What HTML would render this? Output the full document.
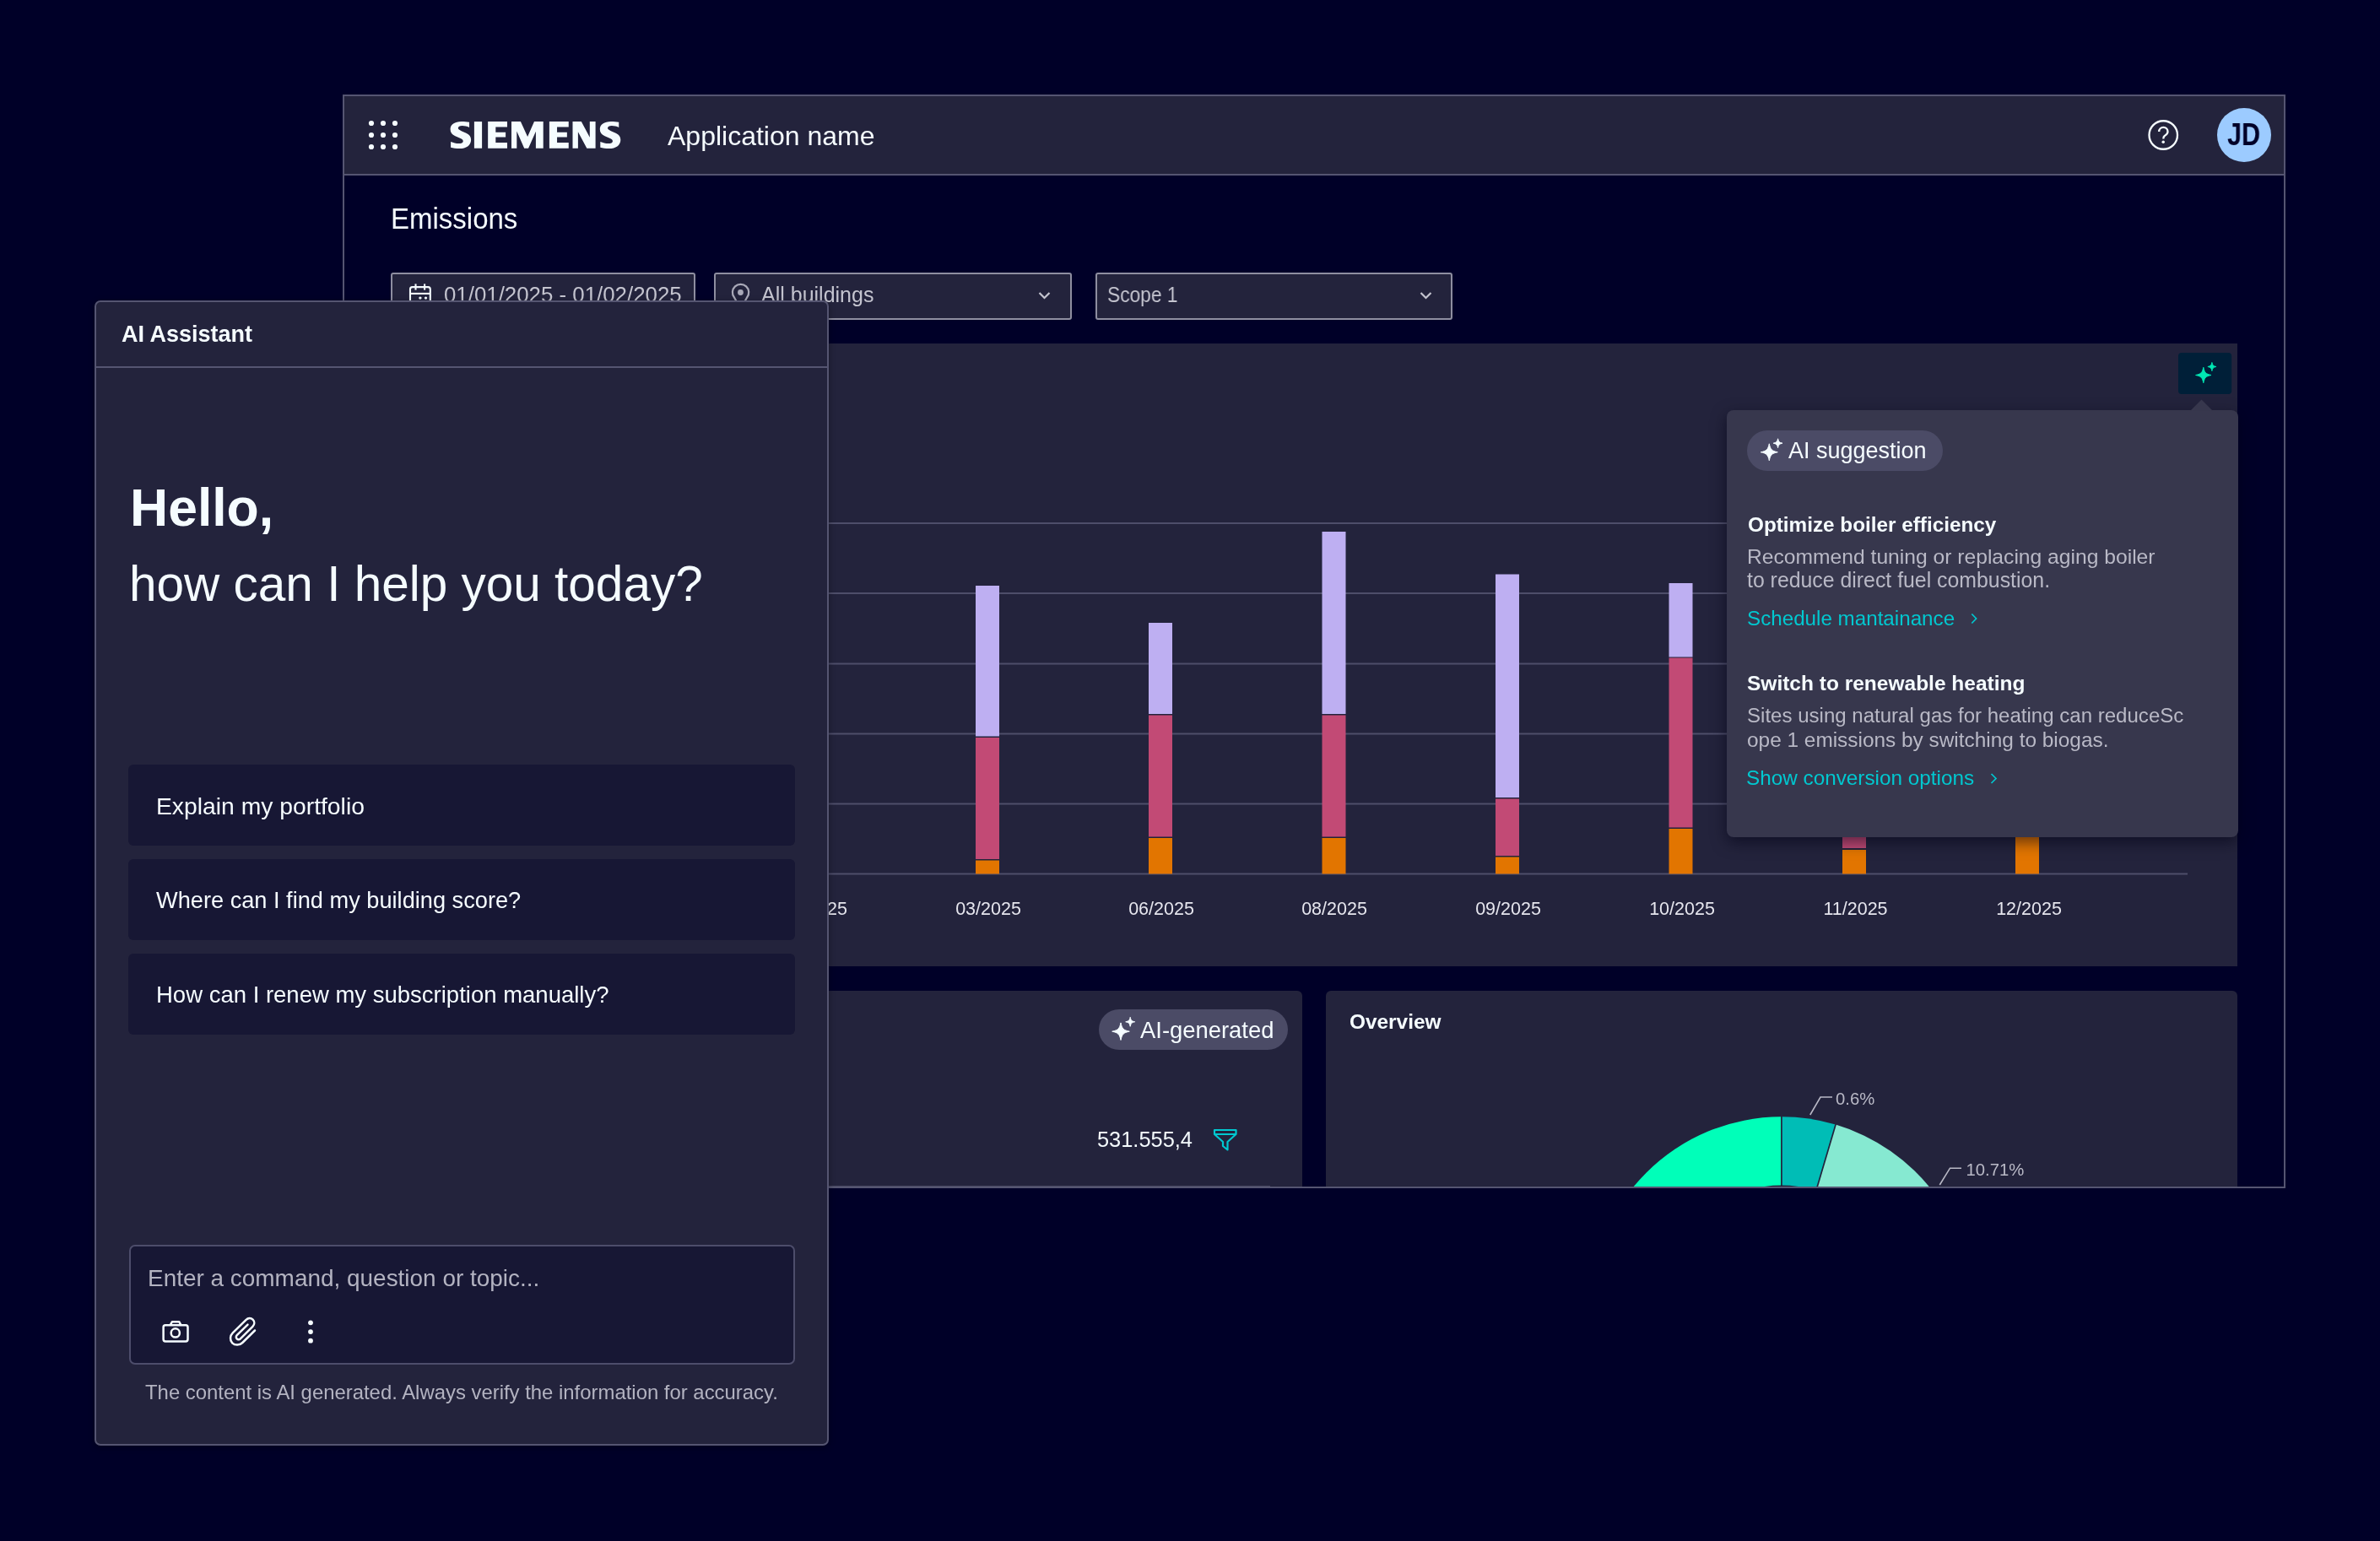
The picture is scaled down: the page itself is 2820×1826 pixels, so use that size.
<!DOCTYPE html>
<html><head><meta charset="utf-8">
<style>
*{box-sizing:border-box;margin:0;padding:0}
html,body{width:2820px;height:1826px;overflow:hidden;background:#000028;font-family:"Liberation Sans",sans-serif;color:#f5fcff}
.a{position:absolute}
.t{position:absolute;white-space:nowrap;line-height:1;will-change:transform}
svg{position:absolute;overflow:visible}
</style></head><body>

<!-- ============ APP WINDOW ============ -->
<div class="a" id="win" style="left:406px;top:112px;width:2302px;height:1296px;border:2px solid #555571;background:#000028;overflow:hidden">
</div>

<!-- header -->
<div class="a" style="left:408px;top:114px;width:2298px;height:92px;background:#23233c"></div>
<div class="a" style="left:408px;top:206px;width:2298px;height:2px;background:#555571"></div>
<svg style="left:0;top:0" width="2820" height="400">
  <g fill="#f5fcff">
    <circle cx="440" cy="146" r="3.1"/><circle cx="454" cy="146" r="3.1"/><circle cx="468" cy="146" r="3.1"/>
    <circle cx="440" cy="160" r="3.1"/><circle cx="454" cy="160" r="3.1"/><circle cx="468" cy="160" r="3.1"/>
    <circle cx="440" cy="174" r="3.1"/><circle cx="454" cy="174" r="3.1"/><circle cx="468" cy="174" r="3.1"/>
  </g>
  <circle cx="2563.25" cy="160" r="16.75" fill="none" stroke="#f5fcff" stroke-width="2.3"/>
  <circle cx="2659" cy="160" r="32" fill="#9ccbff"/>
</svg>
<svg style="left:0;top:0" width="800" height="200"><g fill="#f5fcff">
  <path transform="translate(528,140) scale(0.025961)" d="M1080 185 L1080 420 C980 380 860 350 760 350 C640 350 570 395 570 455 C570 510 630 545 720 585 L940 680 C1090 750 1160 850 1160 990 C1160 1240 930 1390 640 1390 C490 1390 340 1370 235 1340 L235 1080 C360 1130 480 1160 590 1160 C720 1160 800 1110 800 1045 C800 990 750 955 660 915 L440 820 C290 750 215 650 215 500 C215 290 420 150 720 150 C850 150 980 165 1080 185Z"/>
  <path transform="translate(705.2,140) scale(0.025961)" d="M1080 185 L1080 420 C980 380 860 350 760 350 C640 350 570 395 570 455 C570 510 630 545 720 585 L940 680 C1090 750 1160 850 1160 990 C1160 1240 930 1390 640 1390 C490 1390 340 1370 235 1340 L235 1080 C360 1130 480 1160 590 1160 C720 1160 800 1110 800 1045 C800 990 750 955 660 915 L440 820 C290 750 215 650 215 500 C215 290 420 150 720 150 C850 150 980 165 1080 185Z"/>
  <rect x="561.9" y="144.1" width="9.2" height="31.6"/>
  <path d="M578.15 144.1 H601.00 V150.4 H587.30 V156.7 H599.10 V162.4 H587.30 V169.0 H601.00 V175.7 H578.15 Z"/>
  <path d="M650.90 144.1 H673.75 V150.4 H660.05 V156.7 H671.85 V162.4 H660.05 V169.0 H673.75 V175.7 H650.90 Z"/>
  <path d="M606.0 144.1 H616.9 L625.1 162.1 L633.0 144.1 H643.7 V175.7 H634.9 V155.8 L626.05 175.7 H621.2 L612.3 155.4 V175.7 H606.0 Z"/>
  <path d="M678.5 144.1 H688.8 L698.8 162.8 V144.1 H705.6 V175.7 H695.35 L684.9 156.2 V175.7 H678.5 Z"/>
</g></svg>
<div class="t" style="left:791px;top:145px;font-size:32px">Application name</div>
<div class="t" style="left:2639.3px;top:141.5px;font-size:36px;font-weight:700;color:#000028;transform:scaleX(0.85);transform-origin:0 0">JD</div>

<!-- page title -->
<div class="t" style="left:463.3px;top:243px;font-size:33px;transform:scaleY(1.07);transform-origin:0 85%">Emissions</div>

<!-- filters -->
<div class="a" style="left:463px;top:323px;width:361px;height:56px;border:2px solid #8e8ea0;border-radius:3px;background:#23233c"></div>
<div class="a" style="left:846px;top:323px;width:424px;height:56px;border:2px solid #8e8ea0;border-radius:3px;background:#23233c"></div>
<div class="a" style="left:1298px;top:323px;width:423px;height:56px;border:2px solid #8e8ea0;border-radius:3px;background:#23233c"></div>
<div class="t" style="left:526px;top:337px;font-size:25.85px;color:#c4c4cf">01/01/2025 - 01/02/2025</div>
<div class="t" style="left:902px;top:337px;font-size:25px;color:#c4c4cf">All buildings</div>
<div class="t" style="left:1312px;top:337px;font-size:25px;color:#c4c4cf;transform:scaleX(0.91);transform-origin:0 0">Scope 1</div>

<svg style="left:0;top:0" width="1800" height="1700">
  <!-- calendar -->
  <g fill="none" stroke="#f5fcff" stroke-width="2.1">
    <rect x="486" y="340.1" width="23.8" height="30" rx="2.6"/>
    <line x1="486" y1="347.9" x2="509.8" y2="347.9"/>
    <line x1="492.5" y1="336.4" x2="492.5" y2="343.6"/>
    <line x1="503.1" y1="336.4" x2="503.1" y2="343.6"/>
  </g>
  <g fill="#f5fcff"><circle cx="497.9" cy="353.1" r="1.7"/><circle cx="504.5" cy="353.1" r="1.7"/></g>
  <!-- location -->
  <path d="M877.55 366 L870.03 352.5 A9.65 9.65 0 1 1 885.07 352.5 Z" fill="none" stroke="#a9a9b8" stroke-width="2.2" stroke-linejoin="round"/>
  <circle cx="877.45" cy="346.5" r="3.4" fill="#a9a9b8"/>
  <!-- chevrons -->
  <g fill="none" stroke="#c4c4cf" stroke-width="2.2">
    <path d="M1231.5 347 L1237.5 353 L1243.5 347"/>
    <path d="M1683.5 347 L1689.5 353 L1695.5 347"/>
  </g>
  <!-- help ? -->
  <path d="M2558.2 156 C2558.2 152.8 2560.5 150.9 2563.3 150.9 C2566.3 150.9 2568.5 153 2568.5 155.9 C2568.5 158.6 2566.6 159.7 2564.8 161 C2563.6 161.9 2563.3 162.6 2563.3 164.6" fill="none" stroke="#f5fcff" stroke-width="2.3"/>
  <circle cx="2563.2" cy="168.2" r="1.75" fill="#f5fcff"/>
  </svg>

<!-- chart card -->
<div class="a" style="left:463px;top:407px;width:2188.4px;height:738px;background:#23233c"></div>

<svg style="left:0;top:0" width="2820" height="1200">
  <g fill="#4e4e6a">
    <rect x="500" y="619" width="2092" height="2"/>
    <rect x="500" y="702" width="2092" height="2"/>
    <rect x="500" y="785.5" width="2092" height="2"/>
    <rect x="500" y="868.5" width="2092" height="2"/>
    <rect x="500" y="951.5" width="2092" height="2"/>
    <rect x="500" y="1034.5" width="2092" height="2"/>
  </g>
  <!-- bars: lavender / pink / orange -->
  <g>
    <rect x="1156" y="694" width="28" height="178.5" fill="#beaff2"/>
    <rect x="1156" y="874" width="28" height="144" fill="#c24a75"/>
    <rect x="1156" y="1019.5" width="28" height="16" fill="#e27500"/>

    <rect x="1361" y="738" width="28" height="108" fill="#beaff2"/>
    <rect x="1361" y="847.5" width="28" height="144" fill="#c24a75"/>
    <rect x="1361" y="993" width="28" height="42.5" fill="#e27500"/>

    <rect x="1566.5" y="630" width="28" height="216" fill="#beaff2"/>
    <rect x="1566.5" y="847.5" width="28" height="144" fill="#c24a75"/>
    <rect x="1566.5" y="993" width="28" height="42.5" fill="#e27500"/>

    <rect x="1772" y="680.5" width="28" height="264.5" fill="#beaff2"/>
    <rect x="1772" y="946.5" width="28" height="67.5" fill="#c24a75"/>
    <rect x="1772" y="1015.5" width="28" height="20" fill="#e27500"/>

    <rect x="1977.5" y="691" width="28" height="87.5" fill="#beaff2"/>
    <rect x="1977.5" y="779.5" width="28" height="201" fill="#c24a75"/>
    <rect x="1977.5" y="982" width="28" height="53.5" fill="#e27500"/>

    <rect x="2183" y="900" width="28" height="105" fill="#c24a75"/>
    <rect x="2183" y="1007" width="28" height="28.5" fill="#e27500"/>

    <rect x="2388" y="900" width="28" height="135.5" fill="#e27500"/>
  </g>
  <g font-family="Liberation Sans" font-size="21.5" fill="#e6e6ee" text-anchor="middle">
    <text x="965" y="1083.8">01/2025</text>
    <text x="1171" y="1083.8">03/2025</text>
    <text x="1376" y="1083.8">06/2025</text>
    <text x="1581" y="1083.8">08/2025</text>
    <text x="1787" y="1083.8">09/2025</text>
    <text x="1993" y="1083.8">10/2025</text>
    <text x="2198.5" y="1083.8">11/2025</text>
    <text x="2404" y="1083.8">12/2025</text>
  </g>
  <!-- AI button -->
  <rect x="2581" y="418" width="63.2" height="49" rx="4" fill="#001f38"/>
  <g fill="#00e8b4" stroke="#00e8b4" stroke-width="1" stroke-linejoin="round">
    <path d="M2610.80 435.30 C2612.18 441.74 2613.56 443.12 2620.00 444.50 C2613.56 445.88 2612.18 447.26 2610.80 453.70 C2609.42 447.26 2608.04 445.88 2601.60 444.50 C2608.04 443.12 2609.42 441.74 2610.80 435.30Z"/>
    <path d="M2620.90 429.50 C2621.65 433.00 2622.40 433.75 2625.90 434.50 C2622.40 435.25 2621.65 436.00 2620.90 439.50 C2620.15 436.00 2619.40 435.25 2615.90 434.50 C2619.40 433.75 2620.15 433.00 2620.90 429.50Z"/>
  </g>
</svg>

<!-- popover -->
<div class="a" style="left:2046px;top:486px;width:606px;height:506px;background:#37374d;border-radius:8px;box-shadow:0 6px 18px rgba(0,0,20,0.55)"></div>
<svg style="left:0;top:0" width="2820" height="600">
  <path d="M2595.5 486.5 L2608.5 473.5 L2621.5 486.5 Z" fill="#37374d"/>
</svg>
<div class="a" style="left:2070px;top:510px;width:232px;height:48px;background:#4b4b66;border-radius:24px"></div>
<svg style="left:0;top:0" width="2820" height="600">
  <g fill="#f5fcff" stroke="#f5fcff" stroke-width="1" stroke-linejoin="round">
    <path d="M2096.30 525.80 C2097.80 532.80 2099.30 534.30 2106.30 535.80 C2099.30 537.30 2097.80 538.80 2096.30 545.80 C2094.80 538.80 2093.30 537.30 2086.30 535.80 C2093.30 534.30 2094.80 532.80 2096.30 525.80Z"/>
    <path d="M2106.60 519.80 C2107.41 523.58 2108.22 524.39 2112.00 525.20 C2108.22 526.01 2107.41 526.82 2106.60 530.60 C2105.79 526.82 2104.98 526.01 2101.20 525.20 C2104.98 524.39 2105.79 523.58 2106.60 519.80Z"/>
  </g>
</svg>
<div class="t" style="left:2119px;top:521.2px;font-size:27px">AI suggestion</div>
<div class="t" style="left:2070.5px;top:610px;font-size:24.3px;font-weight:700">Optimize boiler efficiency</div>
<div class="t" style="left:2070.2px;top:647.6px;font-size:24.65px;color:#b9b9c6">Recommend tuning or replacing aging boiler</div>
<div class="t" style="left:2070.2px;top:675.5px;font-size:24.85px;color:#b9b9c6">to reduce direct fuel combustion.</div>
<div class="t" style="left:2070.2px;top:721px;font-size:24.2px;color:#00c8d0">Schedule mantainance</div>
<div class="t" style="left:2070.2px;top:798px;font-size:24.5px;font-weight:700">Switch to renewable heating</div>
<div class="t" style="left:2069.5px;top:836.3px;font-size:24.05px;color:#b9b9c6">Sites using natural gas for heating can reduceSc</div>
<div class="t" style="left:2069.5px;top:864.9px;font-size:24.4px;color:#b9b9c6">ope 1 emissions by switching to biogas.</div>
<div class="t" style="left:2069.2px;top:910.1px;font-size:24.3px;color:#00c8d0">Show conversion options</div>
<svg style="left:0;top:0" width="2820" height="1000">
  <g fill="none" stroke="#00c8d0" stroke-width="1.7">
    <path d="M2336.3 727.5 L2341.6 733 L2336.3 738.5"/>
    <path d="M2359.5 917 L2365 922.5 L2359.5 928"/>
  </g>
</svg>

<!-- bottom cards -->
<div class="a" style="left:463px;top:1174px;width:1080px;height:232px;background:#23233c;border-radius:6px 6px 0 0"></div>
<div class="a" style="left:1571px;top:1174px;width:1080px;height:232px;background:#23233c;border-radius:6px 6px 0 0"></div>
<div class="a" style="left:1302px;top:1196px;width:224px;height:48px;background:#4b4b66;border-radius:24px"></div>
<div class="t" style="left:1351px;top:1207px;font-size:27.4px">AI-generated</div>
<div class="a" style="left:982px;top:1405px;width:523px;height:1px;background:#4a4a64"></div>
<div class="t" style="left:1300px;top:1338.3px;font-size:25.4px">531.555,4</div>
<div class="t" style="left:1599px;top:1198.8px;font-size:24.4px;font-weight:700">Overview</div>
<svg style="left:0;top:0" width="2820" height="1410">
  <g fill="#f5fcff" stroke="#f5fcff" stroke-width="1" stroke-linejoin="round">
    <path d="M1328.00 1211.90 C1329.55 1219.11 1331.09 1220.65 1338.30 1222.20 C1331.09 1223.75 1329.55 1225.29 1328.00 1232.50 C1326.45 1225.29 1324.91 1223.75 1317.70 1222.20 C1324.91 1220.65 1326.45 1219.11 1328.00 1211.90Z"/>
    <path d="M1339.20 1205.30 C1340.03 1209.15 1340.85 1209.97 1344.70 1210.80 C1340.85 1211.62 1340.03 1212.45 1339.20 1216.30 C1338.38 1212.45 1337.55 1211.62 1333.70 1210.80 C1337.55 1209.97 1338.38 1209.15 1339.20 1205.30Z"/>
  </g>
  <path d="M1439 1339 H1464.5 V1344 L1454.5 1353 V1362.5 L1449 1358 V1353 L1439 1344 Z M1439 1344 H1464.5" fill="none" stroke="#00c8d0" stroke-width="2.2" stroke-linejoin="round"/>
  <!-- donut -->
  <clipPath id="donutclip"><rect x="1571" y="1174" width="1080" height="232"/></clipPath>
  <g clip-path="url(#donutclip)">
    <path d="M2110.7 1549.8 m-226.5 0 A226.5 226.5 0 0 1 2110.7 1323.3 L2110.7 1549.8 Z" fill="#00ffb9"/>
    <path d="M2110.7 1323.3 A226.5 226.5 0 0 1 2175 1332.6 L2110.7 1549.8 Z" fill="#00bdb6"/>
    <path d="M2175 1332.6 A226.5 226.5 0 0 1 2337.2 1549.8 L2110.7 1549.8 Z" fill="#86e9d1"/>
    <g stroke="#23233c" stroke-width="1.7">
      <line x1="2110.9" y1="1323" x2="2110.9" y2="1549.8"/>
      <line x1="2175.2" y1="1332" x2="2110.7" y2="1549.8"/>
    </g>
    <circle cx="2110.7" cy="1549.8" r="145.2" fill="#23233c"/>
  </g>
  <g fill="none" stroke="#b9b9c6" stroke-width="1.6">
    <path d="M2144.8 1321 L2157 1300 H2171"/>
    <path d="M2298.3 1404 L2310.5 1384.2 H2324"/>
  </g>
  <g font-family="Liberation Sans" font-size="20.3" fill="#b9b9c6">
    <text x="2175" y="1309">0.6%</text>
    <text x="2329.5" y="1393">10.71%</text>
  </g>
</svg>

<!-- ============ AI PANEL ============ -->
<div class="a" style="left:112px;top:356px;width:870px;height:1357px;border:2px solid #555571;border-radius:7px;background:#23233c;box-shadow:0 2px 7px rgba(0,0,10,0.38)"></div>
<div class="a" style="left:114px;top:434px;width:866px;height:2px;background:#555571"></div>
<div class="t" style="left:144px;top:383px;font-size:27px;font-weight:700">AI Assistant</div>
<div class="t" style="left:153.5px;top:570px;font-size:62.5px;font-weight:700">Hello,</div>
<div class="t" style="left:153px;top:663px;font-size:58.5px">how can I help you today?</div>

<div class="a" style="left:152px;top:906px;width:790px;height:96px;background:#171734;border-radius:6px"></div>
<div class="a" style="left:152px;top:1018px;width:790px;height:96px;background:#171734;border-radius:6px"></div>
<div class="a" style="left:152px;top:1130px;width:790px;height:96px;background:#171734;border-radius:6px"></div>
<div class="t" style="left:184.5px;top:940.5px;font-size:28.3px">Explain my portfolio</div>
<div class="t" style="left:184.5px;top:1053px;font-size:27.2px">Where can I find my building score?</div>
<div class="t" style="left:184.5px;top:1165px;font-size:27.5px">How can I renew my subscription manually?</div>

<div class="a" style="left:153px;top:1475px;width:789px;height:142px;background:#171734;border:2px solid #4d4d6b;border-radius:7px"></div>
<div class="t" style="left:175.3px;top:1501.2px;font-size:27.95px;color:#b3b3c1">Enter a command, question or topic...</div>
<div class="t" style="left:172px;top:1637.8px;font-size:23.9px;color:#b3b3c1">The content is AI generated. Always verify the information for accuracy.</div>



<svg style="left:0;top:0" width="1000" height="1700">
  <!-- camera -->
  <g fill="none" stroke="#f5fcff" stroke-width="2.5" stroke-linejoin="round">
    <rect x="193.6" y="1570.3" width="28.9" height="19.2" rx="2.4"/>
    <path d="M201.6 1570.3 L204 1566.2 H212.2 L214.6 1570.3"/>
    <circle cx="207.8" cy="1579.4" r="5.1"/>
  </g>
  <!-- paperclip -->
  <path d="M302 1576.5 L287.3 1591 C283.8 1594.5 278.2 1594.3 275.2 1591.3 C272.2 1588.3 272.3 1582.7 275.8 1579.3 L291.6 1563.9 C294 1561.5 297.3 1561.4 299.6 1563.7 C301.9 1566 301.8 1569.4 299.4 1571.8 L284.8 1586.3 C283.6 1587.5 281.7 1587.5 280.6 1586.4 C279.5 1585.3 279.5 1583.4 280.7 1582.2 L293.5 1569.6" fill="none" stroke="#f5fcff" stroke-width="2.5" stroke-linecap="round"/>
  <!-- dots -->
  <g fill="#f5fcff"><circle cx="368" cy="1567.3" r="2.9"/><circle cx="368" cy="1578.1" r="2.9"/><circle cx="368" cy="1588.7" r="2.9"/></g>
</svg>
</body></html>
